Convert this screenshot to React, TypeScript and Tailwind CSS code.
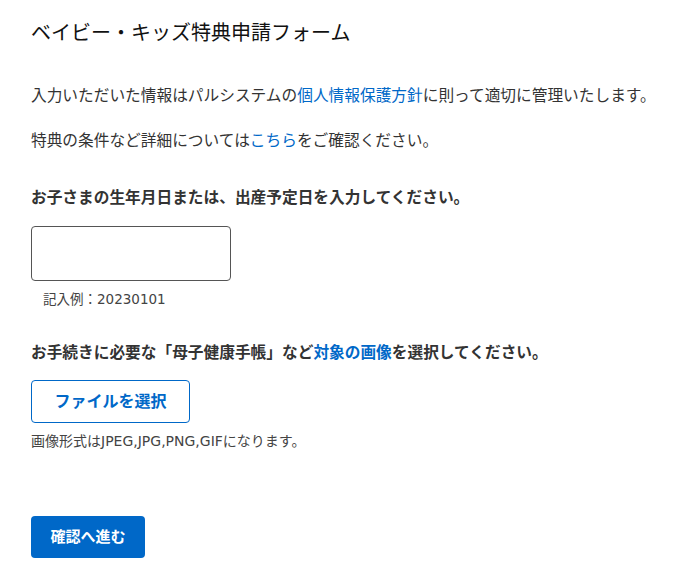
import React from 'react';

const font = {
  fontFamily: '"DejaVu Sans", "Noto Sans CJK JP", sans-serif',
};

export default function App() {
  return (
    <div className="min-h-[580px] bg-white px-[31px] pt-[17px] text-[#333]" style={font}>
      <h1 className="text-[20px] leading-[30px] font-normal text-[#111]" style={{ fontFamily: '"Noto Sans CJK JP", sans-serif' }}>
        ベイビー・キッズ特典申請フォーム
      </h1>

      <p className="mt-[37px] whitespace-nowrap text-[15.7px] leading-[24px]">
        入力いただいた情報はパルシステムの
        <a href="#" className="text-[#0068c8]">個人情報保護方針</a>
        に則って適切に管理いたします。
      </p>
      <p className="mt-[21px] text-[15.7px] leading-[24px]">
        特典の条件など詳細については
        <a href="#" className="text-[#0068c8]">こちら</a>
        をご確認ください。
      </p>

      {/* birth date */}
      <h2 className="mt-[33px] text-[15.7px] leading-[24px] font-bold">
        お子さまの生年月日または、出産予定日を入力してください。
      </h2>
      <input
        type="text"
        className="mt-[16px] block h-[55px] w-[200px] rounded-[4px] border border-[#555] px-3 text-[16px] outline-none"
      />
      <p className="mt-[8px] pl-[12px] text-[13.5px] leading-[20px] text-[#444]">記入例：20230101</p>

      {/* image upload */}
      <h2 className="mt-[32px] text-[15.7px] leading-[24px] font-bold">
        お手続きに必要な「母子健康手帳」など
        <a href="#" className="text-[#0068c8]">対象の画像</a>
        を選択してください。
      </h2>
      <button
        type="button"
        className="mt-[15px] flex h-[43px] w-[159px] items-center justify-center rounded-[4px] border border-[#0068c8] bg-white text-[16px] font-bold text-[#0068c8]"
      >
        ファイルを選択
      </button>
      <p className="mt-[8px] text-[14px] leading-[20px] text-[#444]">
        画像形式はJPEG,JPG,PNG,GIFになります。
      </p>

      <button
        type="button"
        className="mt-[65px] flex h-[42px] w-[114px] items-center justify-center rounded-[4px] bg-[#0068c8] text-[15px] font-bold text-white"
      >
        確認へ進む
      </button>
    </div>
  );
}
